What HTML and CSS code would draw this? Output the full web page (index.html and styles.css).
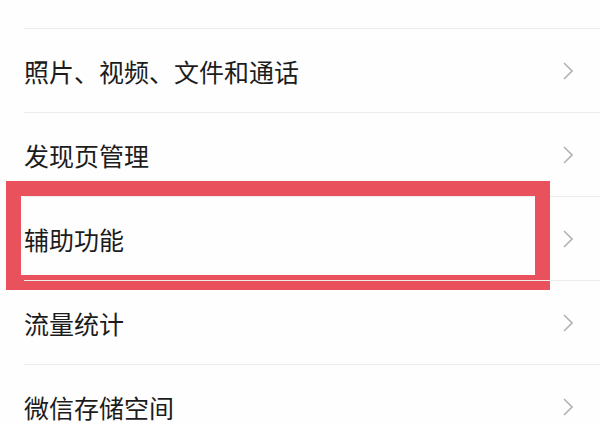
FILE: index.html
```html
<!DOCTYPE html>
<html lang="zh-CN">
<head>
    <meta charset="UTF-8">
    <meta name="viewport" content="width=device-width, initial-scale=1.0">
    <title>设置</title>
    <link rel="stylesheet" href="styles.css">
</head>
<body>
    <ul class="menu">
        <li class="row top"></li>
        <li class="row">
            <div class="row-inner">
                <span class="label">照片、视频、文件和通话</span>
                <svg class="chevron" viewBox="0 0 10 18"><path d="M1 1 L9 9 L1 17"/></svg>
            </div>
        </li>
        <li class="row">
            <div class="row-inner">
                <span class="label">发现页管理</span>
                <svg class="chevron" viewBox="0 0 10 18"><path d="M1 1 L9 9 L1 17"/></svg>
            </div>
        </li>
        <li class="row marked">
            <div class="mark"></div>
            <div class="row-inner">
                <span class="label">辅助功能</span>
                <svg class="chevron" viewBox="0 0 10 18"><path d="M1 1 L9 9 L1 17"/></svg>
            </div>
        </li>
        <li class="row">
            <div class="row-inner">
                <span class="label">流量统计</span>
                <svg class="chevron" viewBox="0 0 10 18"><path d="M1 1 L9 9 L1 17"/></svg>
            </div>
        </li>
        <li class="row">
            <div class="row-inner">
                <span class="label">微信存储空间</span>
                <svg class="chevron" viewBox="0 0 10 18"><path d="M1 1 L9 9 L1 17"/></svg>
            </div>
        </li>
    </ul>
</body>
</html>
```

FILE: styles.css
```css
body {
    margin: 0;
    background-color: #fefefe;
    font-family: "Noto Sans CJK SC", "Noto Sans", sans-serif;
    overflow: hidden;
}
.menu {
    list-style: none;
    margin: 0;
    padding: 0;
}
.row {
    position: relative;
    padding-left: 24px;
}
.row.top {
    height: 28px;
}
.row-inner {
    display: flex;
    align-items: center;
    justify-content: space-between;
    box-sizing: border-box;
    height: 84px;
    border-top: 1px solid #ececec;
    padding-right: 27px;
}
.label {
    font-size: 25px;
    color: #1c1c1c;
    line-height: 1;
    margin-top: 1px;
}
.chevron {
    width: 10px;
    height: 18px;
    fill: none;
    stroke: #b3b3b3;
    stroke-width: 1.6;
}
.mark {
    position: absolute;
    left: 6px;
    top: -15px;
    width: 544px;
    height: 109px;
    box-sizing: border-box;
    border: 15px solid #e9525c;
}
```
